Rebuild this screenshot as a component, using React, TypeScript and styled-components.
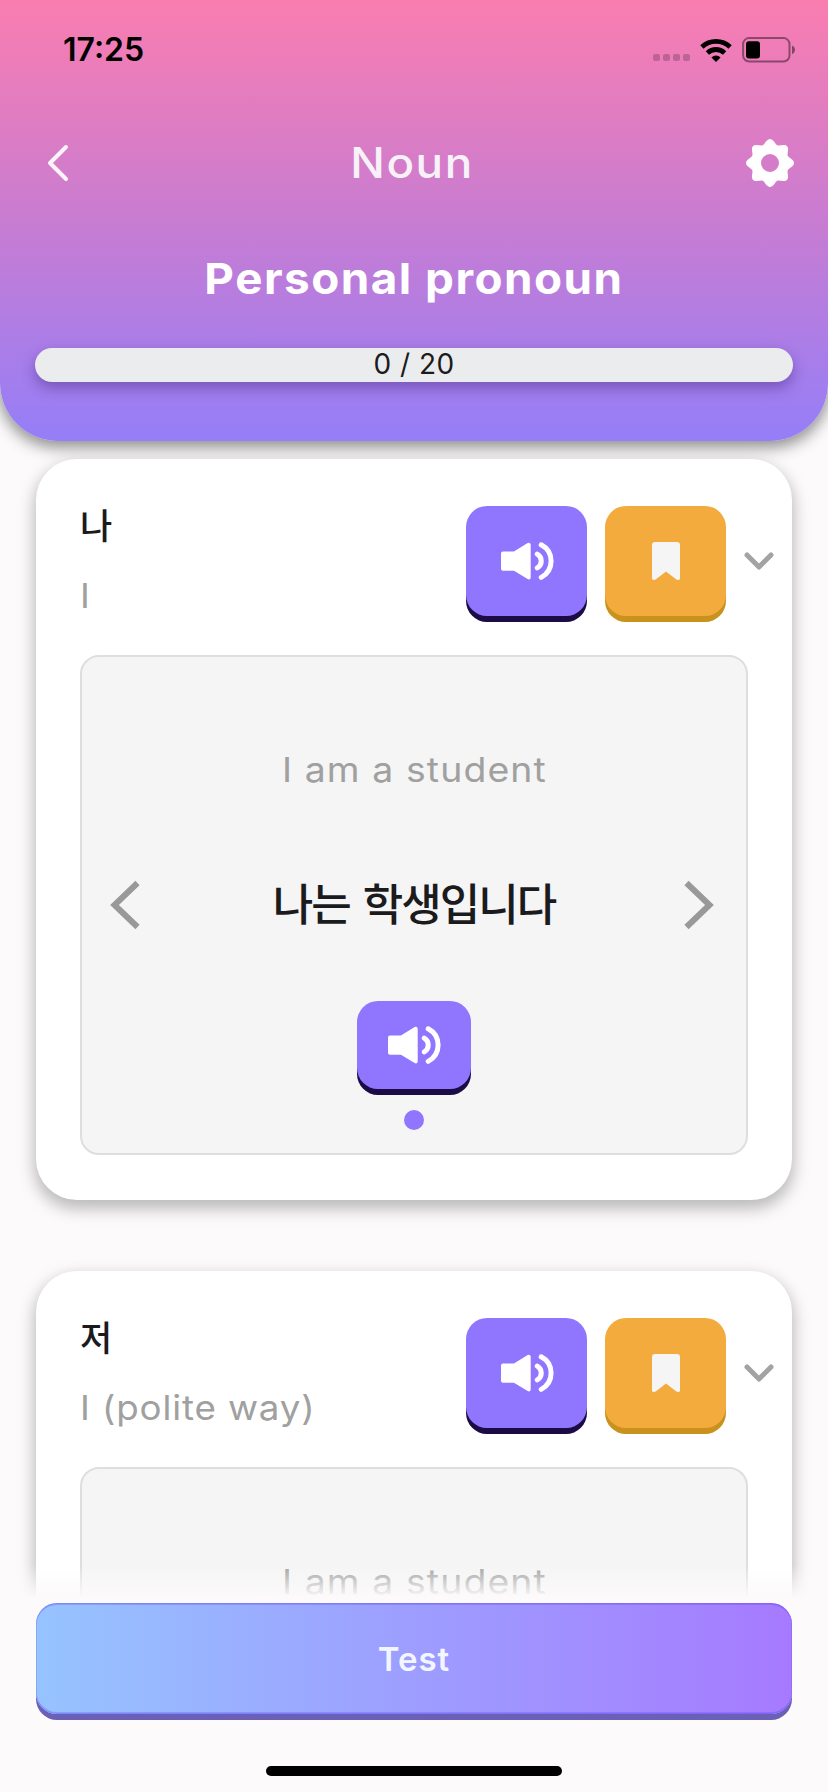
import React from "react";
import styled, { createGlobalStyle } from "styled-components";

const GlobalStyle = createGlobalStyle`
  *, *::before, *::after { box-sizing: border-box; }
  body { margin: 0; background: #fcfafa; }
`;

const latin = `Inter, "Noto Sans CJK KR", sans-serif`;
const korean = `"Noto Sans CJK KR", Inter, sans-serif`;

const Screen = styled.div`
  width: 828px;
  height: 1792px;
  display: flex;
  flex-direction: column;
  overflow: hidden;
  background: #fcfafa;
  font-family: ${latin};
  color: #1b1b1d;
`;

const Header = styled.header`
  flex: none;
  height: 441px;
  display: flex;
  flex-direction: column;
  background: linear-gradient(180deg, #fa7db0 0%, #c67cd3 52%, #957ef8 100%);
  border-radius: 0 0 58px 58px;
  box-shadow: 0 5px 16px 1px rgba(0, 0, 0, 0.45);
`;

const StatusBar = styled.div`
  height: 100px;
  padding: 0 32px 0 63px;
  display: flex;
  align-items: center;
  justify-content: space-between;
`;

const Clock = styled.span`
  color: #000;
  font-size: 32px;
  line-height: 40px;
  font-weight: 600;
`;

const StatusIcons = styled.div`
  display: flex;
  align-items: center;
  gap: 10px;
`;

const SignalDots = styled.div`
  display: flex;
  gap: 3px;
  padding-top: 14px;
`;

const SignalDot = styled.i`
  width: 7px;
  height: 7px;
  border-radius: 2px;
  background: rgba(0, 0, 0, 0.2);
`;

const NavBar = styled.div`
  height: 126px;
  padding: 0 34px 0 46px;
  display: grid;
  grid-template-columns: 32px 1fr 48px;
  align-items: center;
`;

const NavTitle = styled.h1`
  margin: 0;
  text-align: center;
  color: #f7f2f8;
  font-size: 42px;
  line-height: 50px;
  font-weight: 550;
  letter-spacing: 1.4px;
  transform: scaleX(1.09);
`;

const Lesson = styled.h2`
  margin: 25px 0 0;
  height: 54px;
  text-align: center;
  color: #fff;
  font-size: 43px;
  line-height: 54px;
  font-weight: 700;
  letter-spacing: 1.4px;
  transform: scaleX(1.065);
`;

const Progress = styled.div`
  margin: 43px 35px 0;
  height: 34px;
  border-radius: 17px;
  background: #eaecee;
  box-shadow: 0 6px 14px rgba(60, 30, 110, 0.42);
  text-align: center;
  font-size: 28px;
  line-height: 32px;
  letter-spacing: 0.5px;
`;

const List = styled.main`
  position: relative;
  flex: none;
  height: 1160px;
  padding: 18px 36px 0;
  overflow: hidden;
  display: flex;
  flex-direction: column;
  gap: 70.5px;

  &::after {
    content: "";
    position: absolute;
    inset: auto 0 0 0;
    height: 36px;
    background: linear-gradient(180deg, rgba(252, 250, 250, 0), #fcfafa 92%);
  }
`;

const Card = styled.article`
  flex: none;
  height: 741px;
  padding: 47px 44px 45px;
  border-radius: 41px;
  background: #fff;
  box-shadow: 0 7px 16px 2px rgba(0, 0, 0, 0.26);
`;

const CardHead = styled.div`
  height: 149px;
  margin-right: -26px;
  display: flex;
  align-items: flex-start;
`;

const WordBlock = styled.div`
  flex: 1;
`;

const Word = styled.div`
  height: 58px;
  font-family: ${korean};
  font-size: 35px;
  line-height: 35px;
  font-weight: 500;
`;

const Meaning = styled.div`
  color: #a0a0a0;
  font-size: 34px;
  line-height: 64px;
  letter-spacing: 0.8px;
  transform: scaleX(1.08);
  transform-origin: left;
`;

const Actions = styled.div`
  display: flex;
  align-items: flex-start;
  gap: 18px;
`;

const PressButton = styled.button<{ $w: number; $h: number; $face: string; $edge: string }>`
  width: ${(p) => p.$w}px;
  height: ${(p) => p.$h}px;
  padding: 0;
  border: 0;
  border-radius: 21px;
  background: ${(p) => p.$face};
  box-shadow: 0 6px 0 ${(p) => p.$edge};
  display: flex;
  align-items: center;
  justify-content: center;
`;

const Toggle = styled.div`
  height: 110px;
  display: flex;
  align-items: center;
`;

const Example = styled.section`
  height: 500px;
  border: 2px solid #dedede;
  border-radius: 19px;
  background: #f5f5f5;
  display: flex;
  flex-direction: column;
  align-items: center;
`;

const Translation = styled.p`
  margin: 97px 0 0;
  color: #a0a0a0;
  font-size: 34px;
  line-height: 32px;
  letter-spacing: 1px;
  transform: scaleX(1.1);
`;

const SentenceRow = styled.div`
  width: 100%;
  height: 60px;
  margin-top: 89px;
  padding: 0 31px 0 27px;
  display: flex;
  align-items: center;
  justify-content: space-between;
`;

const Sentence = styled.p`
  margin: -6px 0 0 4px;
  font-family: ${korean};
  font-size: 44px;
  line-height: 60px;
  font-weight: 500;
  letter-spacing: -2px;
  word-spacing: 5px;
`;

const PlayWrap = styled.div`
  margin-top: 66px;
`;

const PageDot = styled.i`
  width: 20px;
  height: 20px;
  margin-top: 21px;
  border-radius: 50%;
  background: #9076ff;
`;

const Footer = styled.footer`
  flex: 1;
  padding: 2px 36px 0;
  display: flex;
  flex-direction: column;
  align-items: center;
`;

const TestButton = styled.button`
  width: 100%;
  height: 111px;
  padding: 0;
  border: 0;
  border-radius: 21px;
  background: linear-gradient(90deg, #96c4ff 0%, #9d9fff 48%, #a67aff 100%);
  box-shadow: inset 0 2px 0 rgba(88, 70, 240, 0.28), inset 0 -2px 0 rgba(88, 70, 240, 0.28),
    inset 0 0 0 1px rgba(88, 70, 240, 0.22), 0 6px 0 #6b60b8;
  color: #f3f5ff;
  font-family: ${latin};
  font-size: 33px;
  line-height: 40px;
  font-weight: 600;
  letter-spacing: 1px;
`;

const HomeIndicator = styled.div`
  width: 296px;
  height: 10px;
  margin-top: 52px;
  border-radius: 5px;
  background: #000;
`;

const WifiIcon = () => (
  <svg width="32" height="24" viewBox="0 0 32 24" fill="none" stroke="#000" strokeWidth="4.8">
    <path d="M1.9 9.1a20.4 20.4 0 0 1 28.2 0" />
    <path d="M7.4 14.9a12.6 12.6 0 0 1 17.2 0" />
    <path d="M16 24l-4.6-4.6a6.8 6.8 0 0 1 9.2 0z" fill="#000" stroke="none" />
  </svg>
);

const BatteryIcon = () => (
  <svg width="54" height="26" viewBox="0 0 54 26">
    <rect x="1.1" y="1.1" width="46.4" height="23.4" rx="6" fill="none" stroke="#000" strokeOpacity=".42" strokeWidth="2" />
    <rect x="4" y="4.2" width="14" height="17.2" rx="3" fill="#000" />
    <path d="M50 8.6c4 1.6 4 7 0 8.6z" fill="#000" fillOpacity=".45" />
  </svg>
);

const BackIcon = () => (
  <svg width="24" height="40" viewBox="0 0 24 40" fill="none" stroke="#fbf4fb" strokeWidth="4" strokeLinecap="round" strokeLinejoin="round">
    <path d="M20 4L4 20l16 16" />
  </svg>
);

const gearOutline =
  Array.from({ length: 144 }, (_, i) => {
    const a = (i / 144) * Math.PI * 2;
    const r = 21.6 + 2.4 * Math.cos(8 * a);
    return `${i ? "L" : "M"}${(24 + r * Math.cos(a)).toFixed(2)} ${(24 + r * Math.sin(a)).toFixed(2)}`;
  }).join("") + "Z";

const GearIcon = () => (
  <svg width="48" height="48" viewBox="0 0 48 48">
    <path fill="#fff" fillRule="evenodd" d={`${gearOutline}M33 24a9 9 0 1 0-18 0a9 9 0 1 0 18 0Z`} />
  </svg>
);

const SpeakerIcon = () => (
  <svg width="54" height="40" viewBox="0 0 54 40" fill="none" stroke="#fff" strokeLinecap="round" strokeLinejoin="round">
    <path d="M3 12.400h11.600L28.700 3.800v32.600L14.600 27.700H3z" fill="#fff" strokeWidth="4" />
    <path d="M37.300 13.100a8 8 0 0 1 0 13.800" strokeWidth="5" />
    <path d="M41.200 3.800c13.200 7 13.200 25.600 0 32.600" strokeWidth="5" />
  </svg>
);

const BookmarkIcon = () => (
  <svg width="28" height="38" viewBox="0 0 28 38">
    <path fill="#f5f5f5" d="M3 0h22a3 3 0 0 1 3 3v33.500q0 1.500-2 1.500-1 0-2-.8L14 29.500 4 37.200q-1 .8-2 .8-2 0-2-1.500V3a3 3 0 0 1 3-3z" />
  </svg>
);

const ExpandIcon = () => (
  <svg width="30" height="20" viewBox="0 0 30 20" fill="none" stroke="#a3a3a3" strokeWidth="5" strokeLinecap="round" strokeLinejoin="round">
    <path d="M3 4l12 12L27 4" />
  </svg>
);

const PrevIcon = () => (
  <svg width="32" height="50" viewBox="0 0 32 50" fill="none" stroke="#999" strokeWidth="6">
    <path d="M28.500 3L5.500 25l23 22" />
  </svg>
);

const NextIcon = () => (
  <svg width="32" height="50" viewBox="0 0 32 50" fill="none" stroke="#999" strokeWidth="6">
    <path d="M3.500 3l23 22-23 22" />
  </svg>
);

type Entry = { word: string; meaning: string; translation: string; sentence: string };

const entries: Entry[] = [
  { word: "나", meaning: "I", translation: "I am a student", sentence: "나는 학생입니다" },
  { word: "저", meaning: "I (polite way)", translation: "I am a student", sentence: "" },
];

const WordCard = ({ word, meaning, translation, sentence }: Entry) => (
  <Card>
    <CardHead>
      <WordBlock>
        <Word>{word}</Word>
        <Meaning>{meaning}</Meaning>
      </WordBlock>
      <Actions>
        <PressButton $w={121} $h={110} $face="#9076ff" $edge="#1c0c46"><SpeakerIcon /></PressButton>
        <PressButton $w={121} $h={110} $face="#f3ab3e" $edge="#c9921d"><BookmarkIcon /></PressButton>
        <Toggle><ExpandIcon /></Toggle>
      </Actions>
    </CardHead>
    <Example>
      <Translation>{translation}</Translation>
      <SentenceRow>
        <PrevIcon />
        <Sentence>{sentence}</Sentence>
        <NextIcon />
      </SentenceRow>
      <PlayWrap>
        <PressButton $w={114} $h={88} $face="#9076ff" $edge="#1c0c46"><SpeakerIcon /></PressButton>
      </PlayWrap>
      <PageDot />
    </Example>
  </Card>
);

export default function App() {
  return (
    <Screen>
      <GlobalStyle />
      <Header>
        <StatusBar>
          <Clock>17:25</Clock>
          <StatusIcons>
            <SignalDots>
              <SignalDot /><SignalDot /><SignalDot /><SignalDot />
            </SignalDots>
            <WifiIcon />
            <BatteryIcon />
          </StatusIcons>
        </StatusBar>
        <NavBar>
          <BackIcon />
          <NavTitle>Noun</NavTitle>
          <GearIcon />
        </NavBar>
        <Lesson>Personal pronoun</Lesson>
        <Progress>0 / 20</Progress>
      </Header>
      <List>
        {entries.map((e) => <WordCard key={e.word} {...e} />)}
      </List>
      <Footer>
        <TestButton>Test</TestButton>
        <HomeIndicator />
      </Footer>
    </Screen>
  );
}
